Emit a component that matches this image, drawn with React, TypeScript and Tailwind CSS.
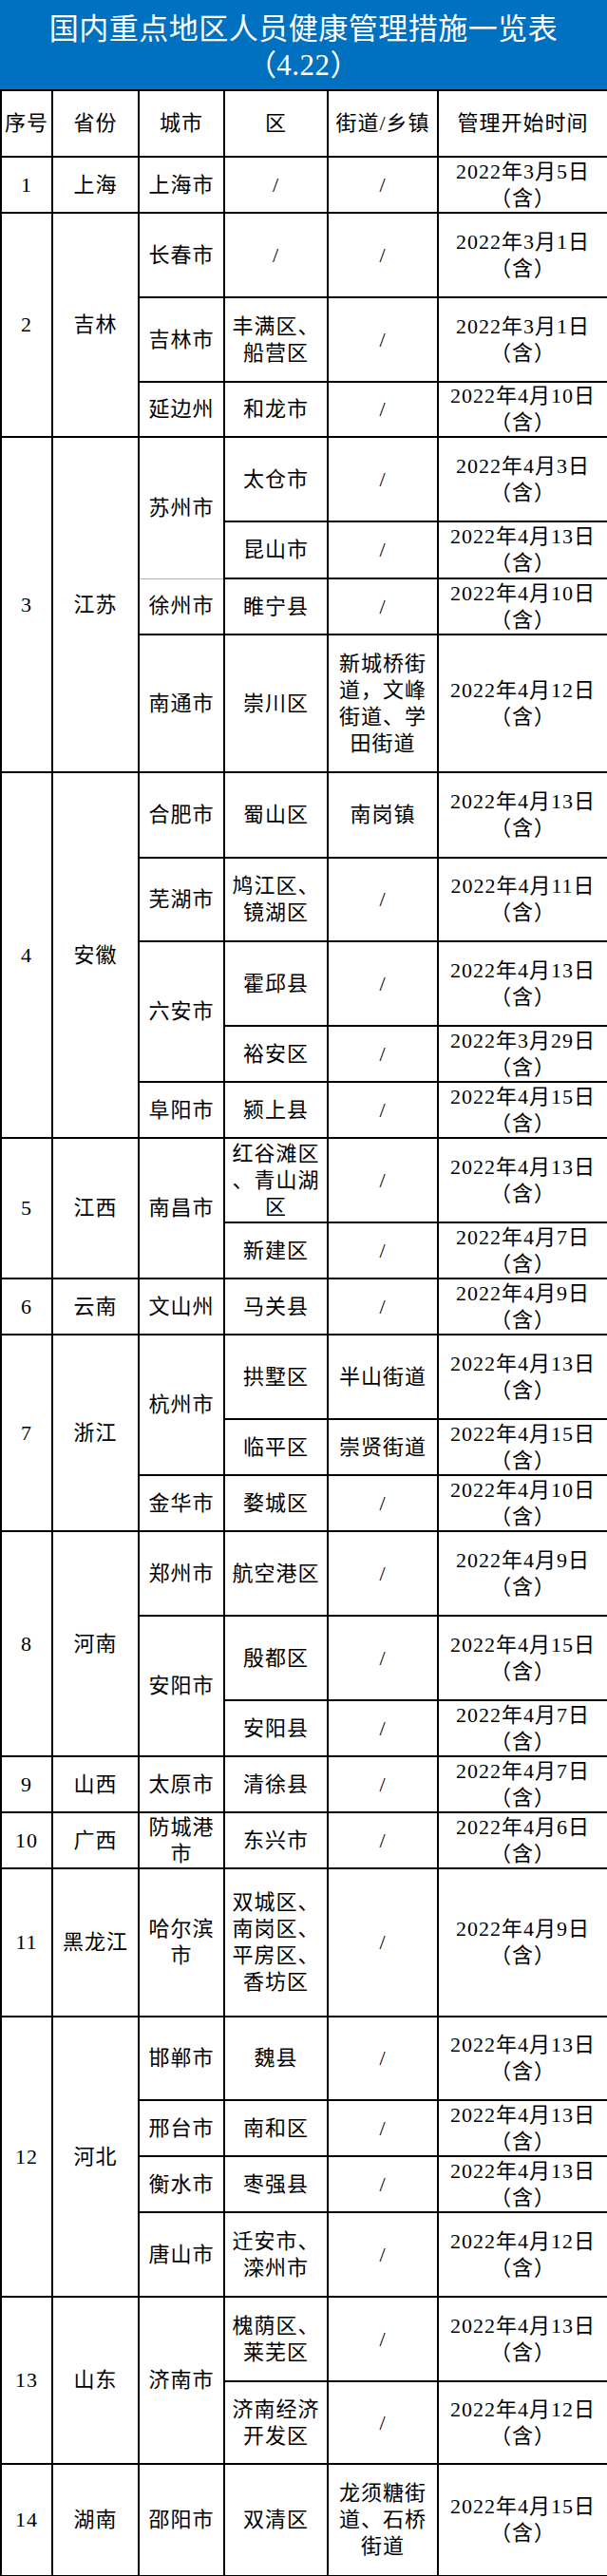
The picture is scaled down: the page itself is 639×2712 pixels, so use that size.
type Cell = { t: string | string[]; rs?: number; cls?: string };
type Row = { h: string; cells: Cell[] };

const S = "/";
const D = (d: string) => [d, "（含）"];

const rows: Row[] = [
  { h: "h-[59px]", cells: [{ t: "1" }, { t: "上海" }, { t: "上海市" }, { t: S }, { t: S }, { t: D("2022年3月5日") }] },

  { h: "h-[89px]", cells: [{ t: "2", rs: 3 }, { t: "吉林", rs: 3 }, { t: "长春市" }, { t: S }, { t: S }, { t: D("2022年3月1日") }] },
  { h: "h-[89px]", cells: [{ t: "吉林市" }, { t: ["丰满区、", "船营区"] }, { t: S }, { t: D("2022年3月1日") }] },
  { h: "h-[58px]", cells: [{ t: "延边州" }, { t: "和龙市" }, { t: S }, { t: D("2022年4月10日") }] },

  { h: "h-[89px]", cells: [{ t: "3", rs: 4 }, { t: "江苏", rs: 4 }, { t: "苏州市", rs: 2, cls: "border-b border-b-[#9fb5dd]" }, { t: "太仓市" }, { t: S }, { t: D("2022年4月3日") }] },
  { h: "h-[60px]", cells: [{ t: "昆山市" }, { t: S }, { t: D("2022年4月13日") }] },
  { h: "h-[59px]", cells: [{ t: "徐州市", cls: "border-t border-t-[#9fb5dd]" }, { t: "睢宁县" }, { t: S }, { t: D("2022年4月10日") }] },
  { h: "h-[145px]", cells: [{ t: "南通市" }, { t: "崇川区" }, { t: ["新城桥街", "道，文峰", "街道、学", "田街道"] }, { t: D("2022年4月12日") }] },

  { h: "h-[90px]", cells: [{ t: "4", rs: 5 }, { t: "安徽", rs: 5 }, { t: "合肥市" }, { t: "蜀山区" }, { t: "南岗镇" }, { t: D("2022年4月13日") }] },
  { h: "h-[88px]", cells: [{ t: "芜湖市" }, { t: ["鸠江区、", "镜湖区"] }, { t: S }, { t: D("2022年4月11日") }] },
  { h: "h-[89px]", cells: [{ t: "六安市", rs: 2 }, { t: "霍邱县" }, { t: S }, { t: D("2022年4月13日") }] },
  { h: "h-[59px]", cells: [{ t: "裕安区" }, { t: S }, { t: D("2022年3月29日") }] },
  { h: "h-[59px]", cells: [{ t: "阜阳市" }, { t: "颍上县" }, { t: S }, { t: D("2022年4月15日") }] },

  { h: "h-[89px]", cells: [{ t: "5", rs: 2 }, { t: "江西", rs: 2 }, { t: "南昌市", rs: 2 }, { t: ["红谷滩区", "、青山湖", "区"] }, { t: S }, { t: D("2022年4月13日") }] },
  { h: "h-[59px]", cells: [{ t: "新建区" }, { t: S }, { t: D("2022年4月7日") }] },

  { h: "h-[59px]", cells: [{ t: "6" }, { t: "云南" }, { t: "文山州" }, { t: "马关县" }, { t: S }, { t: D("2022年4月9日") }] },

  { h: "h-[89px]", cells: [{ t: "7", rs: 3 }, { t: "浙江", rs: 3 }, { t: "杭州市", rs: 2 }, { t: "拱墅区" }, { t: "半山街道" }, { t: D("2022年4月13日") }] },
  { h: "h-[59px]", cells: [{ t: "临平区" }, { t: "崇贤街道" }, { t: D("2022年4月15日") }] },
  { h: "h-[59px]", cells: [{ t: "金华市" }, { t: "婺城区" }, { t: S }, { t: D("2022年4月10日") }] },

  { h: "h-[89px]", cells: [{ t: "8", rs: 3 }, { t: "河南", rs: 3 }, { t: "郑州市" }, { t: "航空港区" }, { t: S }, { t: D("2022年4月9日") }] },
  { h: "h-[89px]", cells: [{ t: "安阳市", rs: 2 }, { t: "殷都区" }, { t: S }, { t: D("2022年4月15日") }] },
  { h: "h-[59px]", cells: [{ t: "安阳县" }, { t: S }, { t: D("2022年4月7日") }] },

  { h: "h-[59px]", cells: [{ t: "9" }, { t: "山西" }, { t: "太原市" }, { t: "清徐县" }, { t: S }, { t: D("2022年4月7日") }] },
  { h: "h-[59px]", cells: [{ t: "10" }, { t: "广西" }, { t: ["防城港", "市"] }, { t: "东兴市" }, { t: S }, { t: D("2022年4月6日") }] },
  { h: "h-[156px]", cells: [{ t: "11" }, { t: "黑龙江" }, { t: ["哈尔滨", "市"] }, { t: ["双城区、", "南岗区、", "平房区、", "香坊区"] }, { t: S }, { t: D("2022年4月9日") }] },

  { h: "h-[88px]", cells: [{ t: "12", rs: 4 }, { t: "河北", rs: 4 }, { t: "邯郸市" }, { t: "魏县" }, { t: S }, { t: D("2022年4月13日") }] },
  { h: "h-[59px]", cells: [{ t: "邢台市" }, { t: "南和区" }, { t: S }, { t: D("2022年4月13日") }] },
  { h: "h-[59px]", cells: [{ t: "衡水市" }, { t: "枣强县" }, { t: S }, { t: D("2022年4月13日") }] },
  { h: "h-[89px]", cells: [{ t: "唐山市" }, { t: ["迁安市、", "滦州市"] }, { t: S }, { t: D("2022年4月12日") }] },

  { h: "h-[89px]", cells: [{ t: "13", rs: 2 }, { t: "山东", rs: 2 }, { t: "济南市", rs: 2 }, { t: ["槐荫区、", "莱芜区"] }, { t: S }, { t: D("2022年4月13日") }] },
  { h: "h-[87px]", cells: [{ t: ["济南经济", "开发区"] }, { t: S }, { t: D("2022年4月12日") }] },

  { h: "h-[118px]", cells: [{ t: "14" }, { t: "湖南" }, { t: "邵阳市" }, { t: "双清区" }, { t: ["龙须糖街", "道、石桥", "街道"] }, { t: D("2022年4月15日") }] },
];

const cellCls = "border-2 border-black p-0 text-center align-middle leading-[28px] font-normal";

function Lines({ t }: { t: string | string[] }) {
  const list = Array.isArray(t) ? t : [t];
  return (
    <>
      {list.map((l, i) => (
        <div key={i} className="whitespace-nowrap">
          {l}
        </div>
      ))}
    </>
  );
}

export default function App() {
  const heads = ["序号", "省份", "城市", "区", "街道/乡镇", "管理开始时间"];

  return (
    <div className="w-[639px] bg-white text-black font-['Liberation_Serif','Noto_Sans_CJK_SC',serif] text-[22px] tracking-[1px]">
      {/* title */}
      <div className="h-[94px] bg-[#0070c0] pt-[12px] text-center text-[31px] leading-[38px] tracking-[0.5px] text-white">
        <div>国内重点地区人员健康管理措施一览表</div>
        <div>（4.22）</div>
      </div>

      <table className="w-full table-fixed border-collapse">
        <colgroup>
          <col className="w-[54px]" />
          <col className="w-[91px]" />
          <col className="w-[90px]" />
          <col className="w-[109px]" />
          <col className="w-[116px]" />
          <col className="w-[179px]" />
        </colgroup>
        <thead>
          <tr className="h-[70px]">
            {heads.map((h) => (
              <th key={h} className={cellCls}>
                {h}
              </th>
            ))}
          </tr>
        </thead>
        <tbody>
          {rows.map((r, i) => (
            <tr key={i} className={r.h}>
              {r.cells.map((c, j) => (
                <td key={j} rowSpan={c.rs} className={c.cls ? `${cellCls} ${c.cls}` : cellCls}>
                  <Lines t={c.t} />
                </td>
              ))}
            </tr>
          ))}
        </tbody>
      </table>
    </div>
  );
}
